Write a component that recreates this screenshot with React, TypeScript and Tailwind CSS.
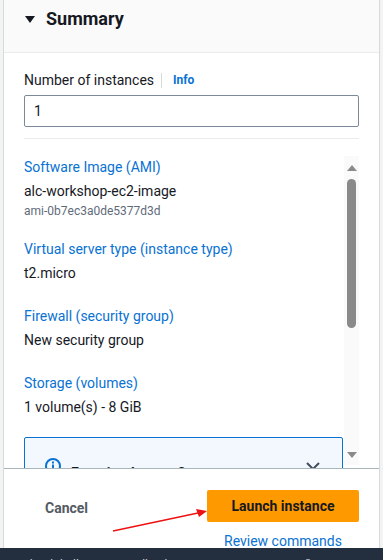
const font = { fontFamily: "Roboto, 'Liberation Sans', Arial, sans-serif" };

const details = [
  { label: "Software Image (AMI)", value: "alc-workshop-ec2-image", sub: "ami-0b7ec3a0de5377d3d" },
  { label: "Virtual server type (instance type)", value: "t2.micro" },
  { label: "Firewall (security group)", value: "New security group" },
  { label: "Storage (volumes)", value: "1 volume(s) - 8 GiB" },
];

function ScrollBar() {
  return (
    <div className="w-[15px] mt-[17px] mb-[3px] bg-[#fafafa] flex flex-col items-center">
      <div className="mt-[9px] w-0 h-0 border-l-[5px] border-r-[5px] border-b-[6px] border-l-transparent border-r-transparent border-b-[#8a8a8a]" />
      <div className="mt-[8px] w-[9px] h-[149px] rounded-full bg-[#8a8a8a]" />
      <div className="flex-1" />
      <div className="mb-[7px] w-0 h-0 border-l-[5px] border-r-[5px] border-t-[6px] border-l-transparent border-r-transparent border-t-[#8a8a8a]" />
    </div>
  );
}

export default function App() {
  return (
    <div className="relative w-[383px] h-[560px] overflow-hidden bg-[#f2f3f3] flex flex-col" style={font}>
      <div className="flex-1 mx-[3px] border-l border-r border-[#d5dbdb] bg-white flex flex-col min-h-0">
        <header className="h-[53px] shrink-0 bg-[#fafafa] border-b border-[#e9ebed] flex items-start pt-[7px] pl-[21px]">
          <div className="flex items-center h-[24px] gap-[11px]">
            <div className="w-0 h-0 border-l-[5px] border-r-[5px] border-t-[7px] border-l-transparent border-r-transparent border-t-[#16191f]" />
            <h2 className="text-[18px] font-bold text-[#16191f] leading-[24px]">Summary</h2>
          </div>
        </header>

        <div className="px-[20px] pt-[17px] shrink-0">
          <div className="flex items-center h-[20px] text-[14px] text-[#16191f]">
            <span>Number of instances</span>
            <span className="ml-[7px] mr-[11px] w-px h-[15px] bg-[#d5dbdb]" />
            <span className="text-[12px] font-bold text-[#0972d3]">Info</span>
          </div>
          <div className="mt-[5px] h-[32px] border border-[#7d8998] rounded-[2px] flex items-center pl-[9px] text-[14px] text-[#16191f]">
            1
          </div>
          <div className="mt-[11px] h-px bg-[#e9ebed]" />
        </div>

        <div className="flex-1 min-h-0 overflow-hidden pl-[20px] pr-[20px] flex">
          <div className="flex-1 min-w-0 pt-[18px] flex flex-col">
            {details.map((d, i) => (
              <div key={d.label} className={i === 0 ? "" : i === 1 ? "mt-[20px]" : "mt-[23px]"}>
                <div className="text-[14px] leading-[20px] text-[#0972d3]">{d.label}</div>
                <div className="mt-[4px] text-[14px] leading-[20px] text-[#16191f]">{d.value}</div>
                {d.sub && (
                  <div className="mt-[2px] text-[12px] leading-[16px] text-[#5f6b7a]">{d.sub}</div>
                )}
              </div>
            ))}
            <div className="mt-[20px] mr-[1px] h-[60px] shrink-0 border border-[#0972d3] rounded-t-[2px] bg-[#f2f8fd] flex items-start pt-[20px] pl-[20px] pr-[21px] gap-[10px]">
              <svg width="16" height="16" viewBox="0 0 16 16" className="shrink-0">
                <circle cx="8" cy="8" r="7" fill="none" stroke="#0972d3" strokeWidth="2" />
                <rect x="7" y="6.5" width="2" height="5" fill="#0972d3" />
                <rect x="7" y="3.5" width="2" height="2" fill="#0972d3" />
              </svg>
              <span className="flex-1 text-[14px] font-bold text-[#16191f] leading-[20px] pt-[5px] whitespace-nowrap overflow-hidden">
                Free tier: In your first year
              </span>
              <svg width="16" height="16" viewBox="0 0 16 16" className="shrink-0">
                <path d="M2 5l6 6 6-6" fill="none" stroke="#414d5c" strokeWidth="2" />
              </svg>
            </div>
          </div>
          <ScrollBar />
        </div>

        <footer className="h-[80px] shrink-0 border-t border-[#aab7b8] bg-white flex items-start pt-[21px] pl-[41px] pr-[20px]">
          <button className="mt-[8px] text-[14px] font-bold text-[#545b64]">Cancel</button>
          <div className="ml-auto flex flex-col items-center w-[152px]">
            <button className="w-[152px] h-[32px] rounded-[2px] bg-[#ff9900] text-[14px] font-bold text-[#16191f]">
              Launch instance
            </button>
            <span className="mt-[9px] text-[14px] leading-[20px] text-[#0972d3]">Review commands</span>
          </div>
        </footer>
      </div>

      <div className="h-[12px] shrink-0 bg-[#232f3e] overflow-hidden pl-[22px] pt-[9px] flex gap-[40px] text-[12px] leading-[16px] text-[#d1d5db] whitespace-nowrap">
        <span>CloudShell</span>
        <span>Feedback</span>
        <span>Language</span>
        <span>© 2024, Amazon Web Services</span>
      </div>

      <svg className="absolute left-0 top-0 pointer-events-none" width="383" height="560">
        <line x1="113" y1="531" x2="198" y2="513" stroke="#ee1111" strokeWidth="1.5" />
        <polygon points="207,511 196,509 199,517" fill="#ee1111" />
      </svg>
    </div>
  );
}
